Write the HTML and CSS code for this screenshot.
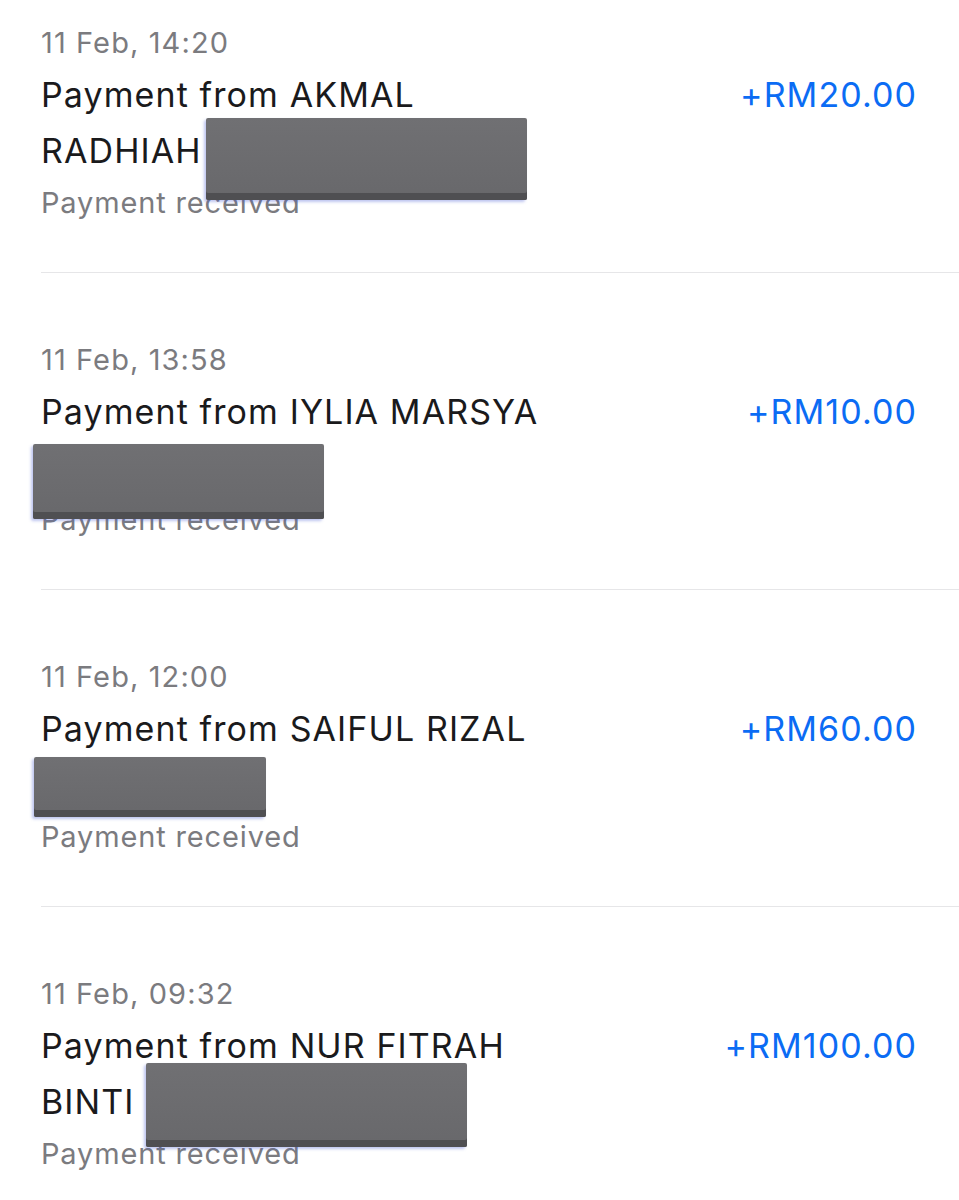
FILE: index.html
```html
<!DOCTYPE html>
<html lang="en">
<head>
  <meta charset="UTF-8"/>
  <meta name="viewport" content="width=device-width, initial-scale=1.0"/>
  <title>Transactions</title>
  <link rel="stylesheet" href="styles.css">
</head>
<body>

  <ul class="txn-list">
    <li class="txn">
      <div class="txn-info">
        <div class="txn-date">11 Feb, 14:20</div>
        <div class="txn-title">Payment from AKMAL<br>RADHIAH</div>
        <div class="txn-status">Payment received</div>
      </div>
      <div class="txn-amount">+RM20.00</div>
      <div class="redact redact-1"></div>
    </li>

    <li class="txn">
      <div class="txn-info">
        <div class="txn-date">11 Feb, 13:58</div>
        <div class="txn-title">Payment from IYLIA MARSYA<br>&nbsp;</div>
        <div class="txn-status">Payment received</div>
      </div>
      <div class="txn-amount">+RM10.00</div>
      <div class="redact redact-2"></div>
    </li>

    <li class="txn">
      <div class="txn-info">
        <div class="txn-date">11 Feb, 12:00</div>
        <div class="txn-title">Payment from SAIFUL RIZAL<br>&nbsp;</div>
        <div class="txn-status">Payment received</div>
      </div>
      <div class="txn-amount">+RM60.00</div>
      <div class="redact redact-3"></div>
    </li>

    <li class="txn">
      <div class="txn-info">
        <div class="txn-date">11 Feb, 09:32</div>
        <div class="txn-title">Payment from NUR FITRAH<br>BINTI</div>
        <div class="txn-status">Payment received</div>
      </div>
      <div class="txn-amount">+RM100.00</div>
      <div class="redact redact-4"></div>
    </li>
  </ul>

</body>
</html>
```

FILE: styles.css
```css
body {
  margin: 0;
  background: #ffffff;
  font-family: 'Inter', 'Noto Sans', sans-serif;
  overflow: hidden;
}

.txn-list {
  list-style: none;
  margin: 0;
  padding: 0;
}

.txn {
  position: relative;
  display: flex;
  justify-content: space-between;
  align-items: flex-start;
  margin-left: 41px;
  padding: 68.5px 43px 49.5px 0;
  border-bottom: 1px solid #e6e6e8;
}

.txn:first-child {
  padding-top: 24.5px;
}

.txn-date {
  font-size: 29px;
  line-height: 36px;
  letter-spacing: 1.1px;
  color: #7b7b7f;
}

.txn-title {
  margin-top: 6.5px;
  font-size: 34px;
  line-height: 56px;
  letter-spacing: 1.1px;
  color: #1a1a1c;
}

.txn-status {
  margin-top: 3.5px;
  font-size: 29px;
  line-height: 40px;
  letter-spacing: 0.85px;
  color: #7b7b7f;
}

.txn-amount {
  margin-top: 42.5px;
  margin-right: -1.1px;
  font-size: 34px;
  line-height: 56px;
  letter-spacing: 1.1px;
  color: #0b6cf4;
}

/* blacked-out names */
.redact {
  position: absolute;
  background: linear-gradient(#707073, #68686b);
  border-radius: 2px;
  box-shadow: inset 0 -7px 0 #4f4f52, -2px 2px 3px rgba(70, 90, 210, 0.35);
}

.redact-1 { left: 165px; top: 118px; width: 321px; height: 82px; }
.redact-2 { left: -8px; top: 171px; width: 291px; height: 75px; }
.redact-3 { left: -7px; top: 167px; width: 232px; height: 60px; }
.redact-4 { left: 105px; top: 156px; width: 321px; height: 84px; }
```
